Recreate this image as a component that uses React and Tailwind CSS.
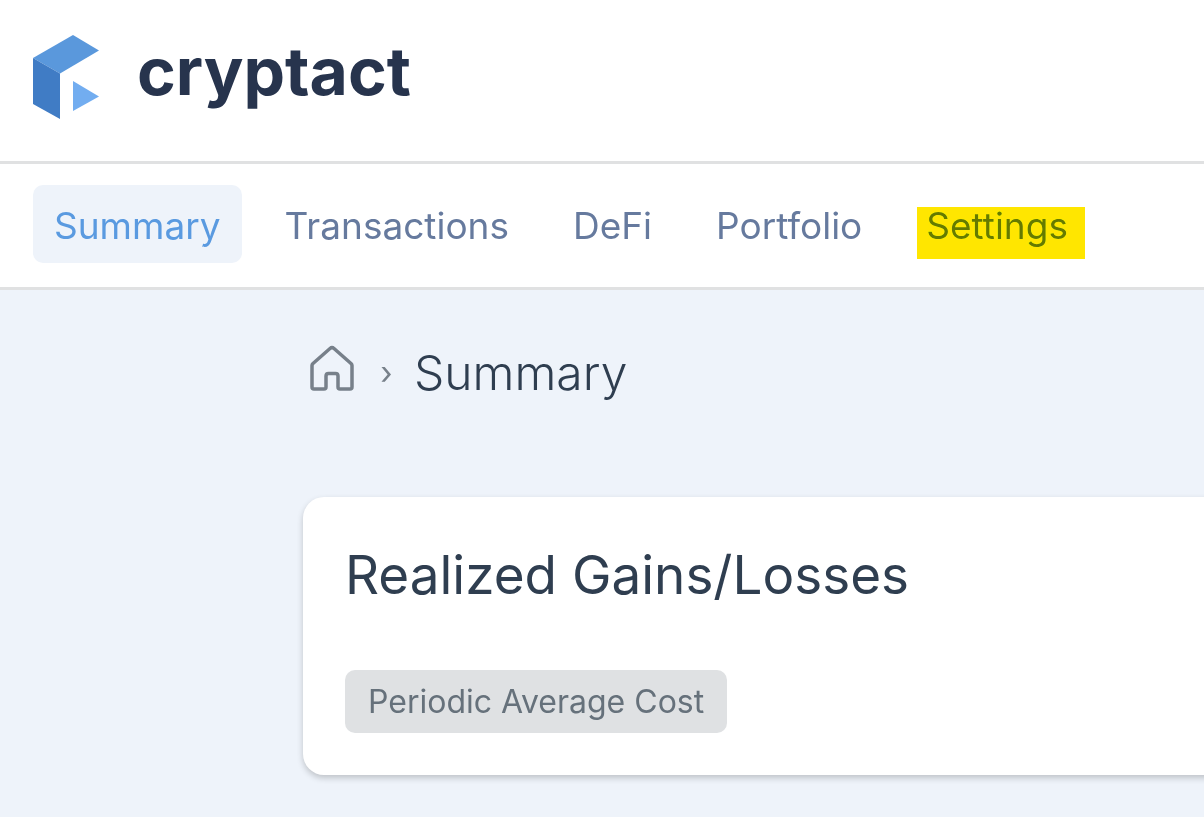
const navItems = [
  { label: "Summary", active: true },
  { label: "Transactions" },
  { label: "DeFi" },
  { label: "Portfolio" },
  { label: "Settings", highlighted: true },
];

function Logo() {
  return (
    <a href="#" className="flex items-start">
      <svg viewBox="0 0 66 84" className="w-[66px] h-[84px]" aria-hidden="true">
        <path d="M0 23 40 0l26 15.500L27 38.500z" fill="#5a98dc" />
        <path d="M0 23l27 15.500V84L0 69z" fill="#407cc5" />
        <path d="M40 46l26 15.500L40 76z" fill="#72adf0" />
      </svg>
      <span className="ml-[38px] text-[66px] leading-[72px] font-bold text-[#27344d]">
        cryptact
      </span>
    </a>
  );
}

function NavItem({ label, active, highlighted }) {
  return (
    <a
      href="#"
      aria-current={active ? "page" : undefined}
      className={
        active
          ? "px-[21px] pt-[14px] pb-[10px] rounded-[10px] bg-[#eef3fa] text-[#5a9ae0]"
          : "relative px-[21px] pt-[14px] pb-[10px] rounded-[10px] text-[#667a9e]"
      }
    >
      {label}
      {highlighted && (
        <span className="absolute left-3 right-1 top-[22px] bottom-1 bg-[#ffe600] mix-blend-darken" />
      )}
    </a>
  );
}

function Breadcrumb() {
  return (
    <div className="flex items-center h-[68px] pl-1.5">
      <a href="#" aria-label="Home" className="pb-0.5">
        <svg
          viewBox="0 0 46 48"
          className="w-[46px] h-12"
          fill="none"
          stroke="#77808a"
          strokeWidth="3.500"
          strokeLinejoin="round"
          strokeLinecap="round"
        >
          <path d="M3 21.500v21.500q0 2 2 2h10q2 0 2-2V32q0-2.500 2.500-2.500h7q2.500 0 2.500 2.500v11q0 2 2 2h10q2 0 2-2V21.500q0-1-1-2L25 4.500q-2-1.700-4 0L4 19.500q-1 1-1 2z" />
        </svg>
      </a>
      <span className="w-[59px] pl-1 pt-2 text-center text-[32px] text-[#77808a]">›</span>
      <h1 className="pt-2 text-[48px] leading-[60px] font-light text-[#2f3e50]">Summary</h1>
    </div>
  );
}

export default function App() {
  return (
    <div className="min-h-screen overflow-hidden bg-[#eef3fa] font-['Inter',sans-serif]">
      <header className="bg-white px-[33px] pt-[35px] pb-[42px] border-b-3 border-[#e0e1e2]">
        <Logo />
      </header>

      <nav className="flex gap-[22px] bg-white px-[33px] pt-[21px] pb-6 border-b-3 border-[#e0e1e2] text-[37px] leading-[54px]">
        {navItems.map((item) => (
          <NavItem key={item.label} {...item} />
        ))}
      </nav>

      <main className="pl-[303px] pt-[45px] pb-[42px]">
        <Breadcrumb />
        <section className="mt-[94px] -mr-6 p-[42px] rounded-l-[21px] bg-white shadow-[0_3px_6px_rgba(0,0,0,0.2)]">
          <h2 className="text-[53px] leading-[72px] text-[#2f3e50]">Realized Gains/Losses</h2>
          <span className="inline-block mt-[59px] px-[23px] py-[7px] rounded-[10px] bg-[#dfe1e3] text-[32px] leading-[49px] text-[#66717b]">
            Periodic Average Cost
          </span>
        </section>
      </main>
    </div>
  );
}
